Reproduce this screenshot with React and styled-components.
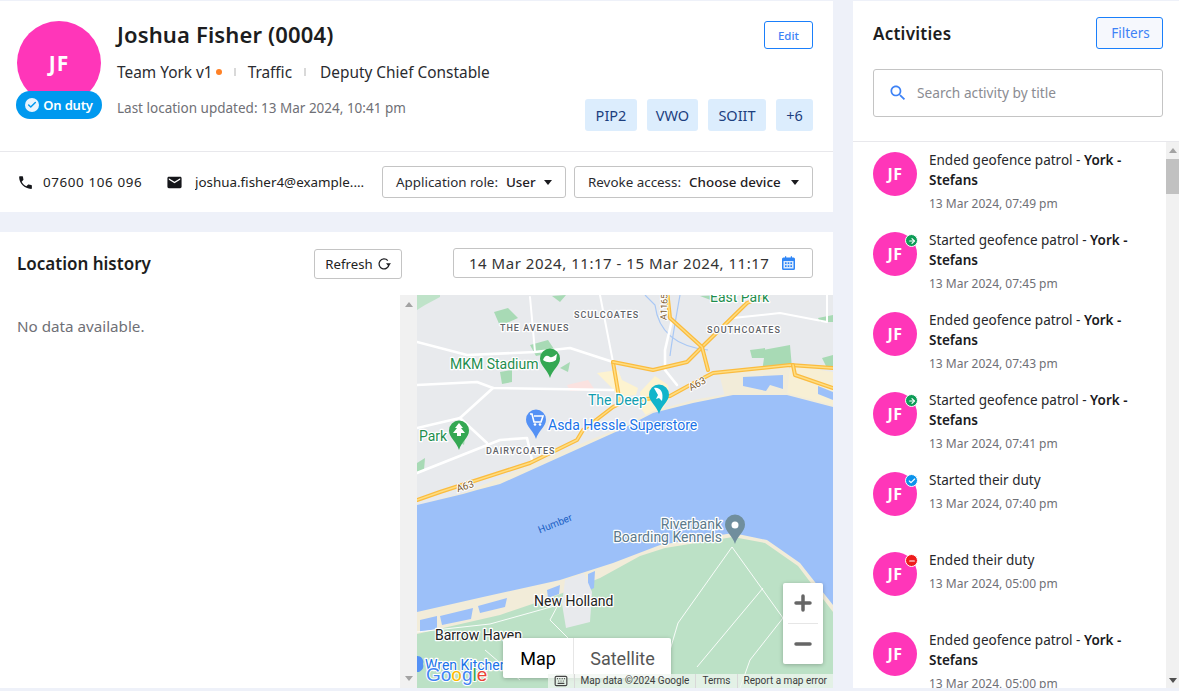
import React from "react";
import styled, { createGlobalStyle } from "styled-components";
import { Check, ArrowRight, Minus, Plus, Keyboard } from "lucide-react";

const FONT = `"Noto Sans", "Open Sans", sans-serif`;

const Global = createGlobalStyle`
  * { box-sizing: border-box; }
  html, body { margin: 0; padding: 0; height: 100%; overflow: hidden; }
  body { font-family: ${FONT}; color: #1f2024; background: #eef1f9; }
`;

const Page = styled.div`
  width: 1179px; height: 691px; padding: 1px 0 3px; display: flex; gap: 20px; background: #eef1f9; overflow: hidden;
`;
const LeftColumn = styled.main`
  width: 833px; display: flex; flex-direction: column; gap: 20px;
`;
const ProfileCard = styled.section`
  background: #fff; height: 211px; display: flex; flex-direction: column;
`;
const ProfileTop = styled.div`
  height: 151px; border-bottom: 1px solid #e8e8ec; padding: 20px 20px 0 17px; display: flex; position: relative;
`;
const AvatarWrap = styled.div`
  width: 84px; height: 98px; position: relative; flex: none;
`;
const Avatar = styled.div`
  width: ${p => p.$size}px; height: ${p => p.$size}px; border-radius: 50%; background: #ff36b9; color: #fff;
  display: flex; align-items: center; justify-content: center; font-weight: 700; font-size: ${p => p.$font}px; letter-spacing: ${p => p.$ls}px; flex: none; position: relative;
`;
const DutyBadge = styled.div`
  position: absolute; left: -1px; top: 70px; width: 86px; height: 28px; border-radius: 14px; background: #0099ef; color: #fff;
  display: flex; align-items: center; justify-content: center; gap: 4px; font-size: 13px; font-weight: 600; letter-spacing: -0.2px;
`;
const DutyCheck = styled.span`
  width: 14px; height: 14px; border-radius: 50%; background: #e8f4fd; color: #0099ef; display: flex; align-items: center; justify-content: center;
`;
const Info = styled.div`
  margin-left: 16px; flex: 1; display: flex; flex-direction: column;
`;
const Name = styled.h1`
  margin: 0; font-size: 22px; line-height: 26px; font-weight: 600; color: #1c1d20; letter-spacing: .15px;
`;
const Meta = styled.div`
  margin-top: 13px; height: 24px; display: flex; align-items: center; font-size: 15.4px; color: #2a2b30;
`;
const MetaItem = styled.span`
  display: inline-flex; align-items: center;
`;
const Dot = styled.i`
  width: 6px; height: 6px; border-radius: 50%; background: #ff8126; margin-left: 3px;
`;
const Sep = styled.i`
  width: 2px; height: 8px; background: #d9d9d9; margin: 0 ${p => p.$gap || 12}px 0 12px;
`;
const Updated = styled.div`
  margin-top: 14px; font-size: 13.5px; line-height: 20px; color: #6f7076;
`;
const EditButton = styled.button`
  position: absolute; right: 20px; top: 20px; width: 49px; height: 28px; border: 1px solid #1a7ffb; border-radius: 3px; background: #fff;
  color: #3d82f6; font: 500 11.5px ${FONT}; padding: 0;
`;
const Tags = styled.div`
  position: absolute; right: 20px; top: 98px; display: flex; gap: 10px;
`;
const Tag = styled.span`
  height: 32px; width: ${p => p.$w}px; border-radius: 3px; background: #dcedfd; color: #1d3f7f; font-size: 14.5px; display: flex; align-items: center; justify-content: center;
`;
const ContactRow = styled.div`
  height: 60px; display: flex; align-items: center; padding: 0 20px 0 18px; font-size: 13.4px; color: #222;
`;
const ContactIcon = styled.svg`
  width: ${p => p.$s}px; height: ${p => p.$s}px; flex: none; fill: #15161a; margin-left: ${p => p.$ml || 0}px;
`;
const ContactText = styled.span`
  margin-left: ${p => p.$ml}px; width: ${p => p.$w}px; white-space: nowrap; overflow: hidden; letter-spacing: ${p => p.$ls || 0}px; flex: none;
`;
const SelectBox = styled.div`
  height: 32px; width: ${p => p.$w}px; margin-left: ${p => p.$ml}px; border: 1px solid #c4c4c4; border-radius: 3px; display: flex; align-items: center; padding: 0 13px;
  font-size: 13.4px; color: #2a2b30; white-space: nowrap; flex: none;
`;
const SelectLabel = styled.span`
  flex: none;
`;
const SelectValue = styled.span`
  margin-left: ${p => p.$ml}px; font-weight: 500; color: #1f2024;
`;
const Caret = styled.i`
  width: 0; height: 0; border-left: 4px solid transparent; border-right: 4px solid transparent; border-top: 5px solid #1b1b1f; margin-left: auto;
`;

const LocationCard = styled.section`
  flex: 1; background: #fff; display: flex; flex-direction: column; min-height: 0;
`;
const LocationHeader = styled.div`
  height: 63px; display: flex; align-items: flex-start; padding: 16px 20px 0 17px;
`;
const SectionTitle = styled.h2`
  margin: 0; font-size: 17px; line-height: 32px; font-weight: 600; color: #1c1d20; flex: 1;
`;
const RefreshButton = styled.button`
  width: 88px; height: 30px; margin-top: 1px; border: 1px solid #c4c4c4; border-radius: 3px; background: #fff; display: flex; align-items: center; justify-content: center; gap: 4px;
  font: 400 13.2px ${FONT}; color: #222; padding: 0;
`;
const DateBox = styled.div`
  width: 360px; height: 30px; margin-left: 51px; border: 1px solid #c4c4c4; border-radius: 3px; display: flex; align-items: center; justify-content: space-between; padding: 0 17px 0 15px;
  font-size: 15px; color: #333; white-space: nowrap; letter-spacing: .52px;
`;
const LocationBody = styled.div`
  flex: 1; display: flex; min-height: 0;
`;
const NoData = styled.div`
  width: 400px; padding: 19px 17px; font-size: 15.2px; line-height: 24px; color: #6f7076;
`;
const Scrollbar = styled.div`
  width: ${p => p.$w}px; background: ${p => p.$bg}; position: relative; flex: none;
`;
const ArrowUp = styled.i`
  position: absolute; top: ${p => p.$t}px; left: 50%; margin-left: -4px; width: 0; height: 0; border-left: 4px solid transparent; border-right: 4px solid transparent; border-bottom: 5px solid #a3a3a3;
`;
const ArrowDown = styled.i`
  position: absolute; bottom: ${p => p.$b}px; left: 50%; margin-left: -4px; width: 0; height: 0; border-left: 4px solid transparent; border-right: 4px solid transparent; border-top: 5px solid ${p => p.$c};
`;
const Thumb = styled.i`
  position: absolute; top: 17px; left: 0; right: 0; height: 35px; background: #c1c1c1;
`;
const MapFrame = styled.div`
  width: 416px; position: relative; overflow: hidden; background: #e8eaed;
`;
const MapSvg = styled.svg`
  display: block; width: 416px; height: 393px;
`;
const MapType = styled.div`
  position: absolute; left: 86px; top: 343px; width: 168px; height: 40px; display: flex; background: #fff; border-radius: 2px; box-shadow: 0 1px 4px rgba(0,0,0,.25); font: 400 18px Roboto, sans-serif;
`;
const MapTab = styled.span`
  display: flex; align-items: center; justify-content: center; width: ${p => p.$w}px; color: ${p => p.$on ? "#000" : "#565656"}; ${p => p.$on ? "" : "border-left:1px solid #e6e6e6;"}
`;
const ZoomBox = styled.div`
  position: absolute; left: 366px; top: 288px; width: 40px; height: 81px; background: #fff; border-radius: 2px; box-shadow: 0 1px 4px rgba(0,0,0,.25); display: flex; flex-direction: column; color: #666;
`;
const ZoomBtn = styled.span`
  flex: 1; display: flex; align-items: center; justify-content: center;
`;
const ZoomLine = styled.i`
  height: 1px; background: #e6e6e6; margin: 0 5px;
`;
const MapFooter = styled.div`
  position: absolute; right: 0; bottom: 0; height: 14px; display: flex; align-items: center; background: rgba(240,245,240,.75); font: 400 10px Roboto, sans-serif; color: #3c3c3c; white-space: nowrap;
`;
const FooterKey = styled.span`
  display: flex; width: 26px; justify-content: center; color: #444;
`;
const FooterItem = styled.span`
  padding: 0 ${p => p.$pr || 6}px 0 6px; border-left: 1px solid #d8d8d8; line-height: 14px;
`;

const RightPanel = styled.aside`
  width: 326px; background: #fff; display: flex; flex-direction: column; min-height: 0;
`;
const ActivitiesHeader = styled.div`
  height: 141px; border-bottom: 1px solid #e8e8ec; padding: 16px 16px 0 20px; display: flex; flex-direction: column;
`;
const HeaderRow = styled.div`
  display: flex; align-items: center; justify-content: space-between;
`;
const ActivitiesTitle = styled.h2`
  margin: 0; font-size: 17px; font-weight: 600; color: #1c1d20; letter-spacing: .25px;
`;
const FilterButton = styled.button`
  width: 67px; height: 32px; border: 1px solid #1a7ffb; border-radius: 3px; background: #f6f8fd; color: #3d82f6; font: 400 13.5px ${FONT}; padding: 0 0 0 2px;
`;
const SearchBox = styled.div`
  margin-top: 20px; height: 48px; border: 1px solid #c4c4c4; border-radius: 3px; display: flex; align-items: center; padding: 0 0 1px 14px; gap: 9px; font-size: 13.7px; color: #8b8c92;
`;
const SearchIcon = styled.svg`
  width: 20px; height: 20px; fill: #3d82f6; flex: none;
`;
const ListArea = styled.div`
  flex: 1; display: flex; min-height: 0; overflow: hidden;
`;
const List = styled.div`
  flex: 1; padding: 10px 0 0 20px; overflow: hidden;
`;
const Item = styled.div`
  height: 80px; display: flex; gap: 12px;
`;
const StatusDot = styled.span`
  position: absolute; right: -1px; top: 2px; width: 11px; height: 11px; border-radius: 50%; background: ${p => p.$c}; border: 1px solid #fff; box-sizing: content-box; color: #fff; display: flex; align-items: center; justify-content: center;
`;
const ItemBody = styled.div`
  width: 212px; margin-top: -2px;
`;
const ItemTitle = styled.div`
  font-size: 13.5px; line-height: 20px; color: #26272b;
`;
const ItemStrong = styled.b`
  font-weight: 600; color: #1a1b1e;
`;
const ItemTime = styled.div`
  margin-top: 4px; font-size: 12px; line-height: 20px; color: #6f7076;
`;

const items = [
  { t: "Ended geofence patrol - ", b: true, d: "13 Mar 2024, 07:49 pm" },
  { t: "Started geofence patrol - ", b: true, d: "13 Mar 2024, 07:45 pm", s: "go" },
  { t: "Ended geofence patrol - ", b: true, d: "13 Mar 2024, 07:43 pm" },
  { t: "Started geofence patrol - ", b: true, d: "13 Mar 2024, 07:41 pm", s: "go" },
  { t: "Started their duty", d: "13 Mar 2024, 07:40 pm", s: "on" },
  { t: "Ended their duty", d: "13 Mar 2024, 05:00 pm", s: "off" },
  { t: "Ended geofence patrol - ", b: true, d: "13 Mar 2024, 05:00 pm" },
];

const statusMap = {
  go: { c: "#0f9d58", I: ArrowRight },
  on: { c: "#0b93ec", I: Check },
  off: { c: "#ee1c1c", I: Minus },
};

const Label = ({ x, y, c = "#1e8e4e", s = 14, w = 400, anchor = "start", ls, children }) => (
  <text x={x} y={y} fill={c} fontSize={s} fontWeight={w} textAnchor={anchor} letterSpacing={ls}
    fontFamily="Roboto, sans-serif" stroke="#fff" strokeWidth={2.5} paintOrder="stroke" strokeLinejoin="round">{children}</text>
);

const Pin = ({ x, y, c, children }) => (
  <g transform={`translate(${x} ${y})`}>
    <path d="M0 29C-2 21-10 17-10 9.500A10 10 0 0 1 10 9.500C10 17 2 21 0 29Z" fill={c} />
    {children}
  </g>
);

const Road = ({ d, w = 2.6 }) => <path d={d} fill="none" stroke="#fff" strokeWidth={w} strokeLinejoin="round" strokeLinecap="round" />;
const Highway = ({ d }) => (
  <g fill="none" strokeLinejoin="round" strokeLinecap="round">
    <path d={d} stroke="#fbbc3f" strokeWidth="4" />
    <path d={d} stroke="#fedd82" strokeWidth="1.500" />
  </g>
);

function MapDrawing() {
  return (
    <MapSvg viewBox="417 295 416 393">
      <rect x="417" y="295" width="416" height="393" fill="#e8eaed" />
      <path d="M417 310L425 305L440 297L440 295L417 295Z" fill="#bfe3c9" />
      {["M494 312L508 308L518 318L500 326Z","M552 296L566 295L560 302Z","M530 345L548 340L556 352L536 356Z","M500 372L512 370L512 382L502 384Z","M560 368L570 362L568 372Z","M417 463L425 458L424 470L417 472Z","M750 350L765 348L765 358L752 358Z","M763 350L790 345L792 368L762 372L764 358Z","M822 358L833 355L833 366L826 366Z","M818 318L833 315L833 322L820 322Z","M700 296L730 295L716 302Z","M456 440L465 438L464 445Z"].map((d, i) => <path key={i} d={d} fill="#a8dab5" />)}
      <path d="M597 373L618 370L622 380L638 388L636 395L618 397L612 388Z" fill="#fdf3d0" />
      <path d="M640 392L655 376L668 385L670 398L660 413L648 418L642 410Z" fill="#fdf3d0" />
      <path d="M567 385L588 380L595 390L570 391Z" fill="#fbe2e0" />
      <path d="M719 373L790 365L787 395L733 395L725 397Z" fill="#f2ecd9" />
      <path d="M790 365L833 372L833 410L800 398L787 395Z" fill="#f7efd4" />
      <path d="M743 377L783 375L783 389L770 385L766 391L743 386Z" fill="#9cc0f9" />
      <path d="M818 386L833 392L833 400L818 394Z" fill="#9cc0f9" />
      <path d="M417 505L463 493L500 478L560 452L620 428L653 411L693 400L733 393L787 393L833 405L833 412L417 512Z" fill="#f2ecd9" />
      <path d="M417 688L417 608L483 592L560 576L613 559L660 541L733 529L767 536L800 559L833 601L833 688Z" fill="#f2ecd9" />
      <path d="M417 688L417 634L500 615L550 598L600 578L640 556L665 548L733 537L765 543L798 566L833 612L833 688Z" fill="#bce1c6" />
      <path d="M417 505L463 494L477 490L500 484L560 457L620 430L653 413L693 403L733 395L787 395L833 407L833 605L800 563L767 540L733 533L660 545L613 563L560 580L483 597L417 612Z" fill="#9cc0f9" />
      <path d="M420 620L437 616L437 629L420 632Z M440 616L473 608L471 619L442 625Z M478 606L507 598L505 607L480 613Z M547 590L560 585L559 594L548 598Z M588 574L595 571L594 588L588 591Z" fill="#9cc0f9" />
      <path d="M565 580L584 573L592 592L590 622L566 628L562 604Z" fill="#e8eaed" />
      <path d="M708 350Q660 345 655 305L645 295M680 295Q672 340 670 356" fill="none" stroke="#a9c8f5" strokeWidth="1.2" />
      <Road d="M417 342L467 355L535 352L570 348L613 362" />
      <Road d="M417 385L477 382L493 388L613 390" />
      <Road d="M493 388L460 418L417 428" />
      <Road d="M460 418L487 443" />
      <Road d="M417 473L500 440L527 438L532 460" />
      <Road d="M530 297L535 352" w={2} />
      <Road d="M600 295L613 362" w={2} />
      <Road d="M677 385L665 370L665 350L672 320" />
      <Road d="M733 318L780 313L827 322L827 295" w={2} />
      <g fill="none" stroke="#fff" strokeWidth="0.9">
        <path d="M732 547L678 623L670 650" /><path d="M732 547L783 618L800 590" />
        <path d="M763 588L697 667" /><path d="M783 618L750 660L740 688" />
        <path d="M417 632L490 624L558 605L550 620L570 640" /><path d="M485 650L520 680" />
      </g>
      <Highway d="M417 500L440 492L530 463L577 440L583 430L613 407L623 402" />
      <Highway d="M613 362L620 403" />
      <Highway d="M623 402L670 396L690 385L713 373L790 365L833 368" />
      <Highway d="M613 362L653 370L687 362L702 347L747 303L767 295" />
      <Highway d="M667 290L670 318L702 347L708 370" />
      <Highway d="M793 365L795 375L833 388" />
      <Label x={574} y={318} c="#5f6368" s={9} w={500} ls={1}>SCULCOATES</Label>
      <Label x={500} y={331} c="#5f6368" s={9} w={500} ls={1}>THE AVENUES</Label>
      <Label x={707} y={333} c="#5f6368" s={9} w={500} ls={1}>SOUTHCOATES</Label>
      <Label x={486} y={454} c="#5f6368" s={9} w={500} ls={1}>DAIRYCOATES</Label>
      <Label x={710} y={302} s={14}>East Park</Label>
      <Label x={450} y={369} s={14}>MKM Stadium</Label>
      <Label x={588} y={405} c="#129eaf" s={14}>The Deep</Label>
      <Label x={548} y={430} c="#1a73e8" s={14}>Asda Hessle Superstore</Label>
      <Label x={419} y={441} s={14}>Park</Label>
      <Label x={722} y={529} c="#5b7a8c" s={14} anchor="end">Riverbank</Label>
      <Label x={722} y={542} c="#5b7a8c" s={14} anchor="end">Boarding Kennels</Label>
      <text x={537} y={527} fill="#1a5fc4" fontSize="10" fontFamily="Roboto, sans-serif" transform="rotate(-22 555 523)">Humber</text>
      <Label x={534} y={606} c="#222" s={14}>New Holland</Label>
      <Label x={435} y={640} c="#222" s={14}>Barrow Haven</Label>
      <Label x={425} y={670} c="#1a73e8" s={14}>Wren Kitchen</Label>
      <text x={667} y={308} fill="#7b5a2e" fontSize="9" fontFamily="Roboto, sans-serif" transform="rotate(-88 667 308) translate(-12 0)" stroke="#fff" strokeWidth="2" paintOrder="stroke">A1165</text>
      <text x={689} y={387} fill="#7b5a2e" fontSize="10" fontFamily="Roboto, sans-serif" transform="rotate(-28 698 385)" stroke="#fff" strokeWidth="2" paintOrder="stroke">A63</text>
      <text x={456} y={490} fill="#7b5a2e" fontSize="10" fontFamily="Roboto, sans-serif" transform="rotate(-18 464 486)" stroke="#fff" strokeWidth="2" paintOrder="stroke">A63</text>
      <Pin x={550} y={349} c="#34a853"><path d="M-7 11c2-5 4-5 7-3 3 1 5-2 7-3l-1 6c-4 3-9 3-13 0Z" fill="#fff" /></Pin>
      <Pin x={659} y={385} c="#12b5cb"><path d="M-5 3c6-1 10 4 8 13l-3-3-3 1 2-4Z" fill="#fff" /></Pin>
      <Pin x={536} y={410} c="#5491f5"><path d="M-6 4h2l2 8h7l2-6h-9" fill="none" stroke="#fff" strokeWidth="1.600" /><circle cx="-1" cy="14.500" r="1.300" fill="#fff" /><circle cx="4" cy="14.500" r="1.300" fill="#fff" /></Pin>
      <Pin x={459} y={421} c="#34a853"><path d="M0 2l4 5h-2l4 5h-4v3h-4v-3h-4l4-5h-2Z" fill="#fff" /></Pin>
      <Pin x={735} y={515} c="#708e9d"><circle cy="10" r="3.500" fill="#fff" /></Pin>
      <path d="M417 656a6 6 0 0 1 6 8a6 6 0 0 1 -6 8Z" fill="#5491f5" />
      <text x={426} y={681} fontSize="19" fontWeight="500" fontFamily="'Liberation Sans', sans-serif" stroke="#fff" strokeWidth="2" paintOrder="stroke">
        <tspan fill="#4285f4">Go</tspan><tspan fill="#fbbc04">o</tspan><tspan fill="#4285f4">g</tspan><tspan fill="#34a853">l</tspan><tspan fill="#ea4335">e</tspan>
      </text>
    </MapSvg>
  );
}

export default function App() {
  return (
    <Page>
      <Global />
      <LeftColumn>
        <ProfileCard>
          <ProfileTop>
            <AvatarWrap>
              <Avatar $size={84} $font={21} $ls={1}>JF</Avatar>
              <DutyBadge><DutyCheck><Check size={10} strokeWidth={3.5} /></DutyCheck>On duty</DutyBadge>
            </AvatarWrap>
            <Info>
              <Name>Joshua Fisher (0004)</Name>
              <Meta>
                <MetaItem>Team York v1<Dot /></MetaItem>
                <Sep />
                <MetaItem>Traffic</MetaItem>
                <Sep $gap={14} />
                <MetaItem>Deputy Chief Constable</MetaItem>
              </Meta>
              <Updated>Last location updated: 13 Mar 2024, 10:41 pm</Updated>
            </Info>
            <EditButton>Edit</EditButton>
            <Tags>
              <Tag $w={52}>PIP2</Tag>
              <Tag $w={51}>VWO</Tag>
              <Tag $w={58}>SOIIT</Tag>
              <Tag $w={37}>+6</Tag>
            </Tags>
          </ProfileTop>
          <ContactRow>
            <ContactIcon $s={17} $ml={-1} viewBox="0 0 24 24"><path d="M6.620 10.790c1.440 2.830 3.760 5.140 6.590 6.590l2.200-2.200c.27-.27.67-.36 1.020-.24 1.120.37 2.330.57 3.570.57.55 0 1 .45 1 1V20c0 .55-.45 1-1 1-9.390 0-17-7.610-17-17 0-.55.45-1 1-1h3.500c.55 0 1 .45 1 1 0 1.250.2 2.450.57 3.570.11.35.03.74-.25 1.020l-2.200 2.200z" /></ContactIcon>
            <ContactText $ml={9} $w={124} $ls={.62}>07600 106 096</ContactText>
            <ContactIcon $s={17} $ml={-1} viewBox="0 0 24 24"><path d="M20 4H4c-1.100 0-2 .9-2 2v12c0 1.100.9 2 2 2h16c1.100 0 2-.9 2-2V6c0-1.100-.9-2-2-2zm0 4l-8 5-8-5V6l8 5 8-5v2z" /></ContactIcon>
            <ContactText $ml={12} $w={172}>joshua.fisher4@example....</ContactText>
            <SelectBox $w={184} $ml={15}><SelectLabel>Application role:</SelectLabel><SelectValue $ml={8}>User</SelectValue><Caret /></SelectBox>
            <SelectBox $w={239} $ml={8}><SelectLabel>Revoke access:</SelectLabel><SelectValue $ml={8}>Choose device</SelectValue><Caret /></SelectBox>
          </ContactRow>
        </ProfileCard>
        <LocationCard>
          <LocationHeader>
            <SectionTitle>Location history</SectionTitle>
            <RefreshButton>Refresh
              <svg width="14" height="14" viewBox="0 0 14 14" fill="none">
                <path d="M10.800 3.600A5 5 0 1 0 12 7.500" stroke="#1f2024" strokeWidth="1.300" />
                <path d="M9 6.200H14L11.500 9.200Z" fill="#1f2024" />
              </svg>
            </RefreshButton>
            <DateBox>14 Mar 2024, 11:17 - 15 Mar 2024, 11:17
              <svg width="13" height="14" viewBox="0 0 13 14">
                <path d="M1.500 1.500H3V0.300H4.200V1.500H8.800V0.300H10V1.500H11.500A1.500 1.500 0 0 1 13 3V12.500A1.500 1.500 0 0 1 11.500 14H1.500A1.500 1.500 0 0 1 0 12.500V3A1.500 1.500 0 0 1 1.500 1.500Z" fill="#2f86f6" />
                <path d="M1.500 5H11.500V12.500H1.500Z" fill="#dcebfd" />
                <path d="M3 6.300H4.600V7.900H3ZM5.700 6.300H7.300V7.900H5.700ZM8.400 6.300H10V7.900H8.400ZM3 9.300H4.600V10.900H3ZM5.700 9.300H7.300V10.900H5.700ZM8.400 9.300H10V10.900H8.400Z" fill="#2f86f6" />
              </svg>
            </DateBox>
          </LocationHeader>
          <LocationBody>
            <NoData>No data available.</NoData>
            <Scrollbar $w={17} $bg="#f1f1f1"><ArrowUp $t={7} /><ArrowDown $b={7} $c="#a3a3a3" /></Scrollbar>
            <MapFrame>
              <MapDrawing />
              <MapType><MapTab $on $w={70}>Map</MapTab><MapTab $w={98}>Satellite</MapTab></MapType>
              <ZoomBox>
                <ZoomBtn><Plus size={24} strokeWidth={3.500} /></ZoomBtn>
                <ZoomLine />
                <ZoomBtn><Minus size={24} strokeWidth={3.500} /></ZoomBtn>
              </ZoomBox>
              <MapFooter>
                <FooterKey><Keyboard size={14} /></FooterKey>
                <FooterItem>Map data ©2024 Google</FooterItem>
                <FooterItem>Terms</FooterItem>
                <FooterItem>Report a map error</FooterItem>
              </MapFooter>
            </MapFrame>
          </LocationBody>
        </LocationCard>
      </LeftColumn>
      <RightPanel>
        <ActivitiesHeader>
          <HeaderRow>
            <ActivitiesTitle>Activities</ActivitiesTitle>
            <FilterButton>Filters</FilterButton>
          </HeaderRow>
          <SearchBox>
            <SearchIcon viewBox="0 0 24 24"><path d="M15.500 14h-.79l-.28-.27C15.410 12.590 16 11.110 16 9.500 16 5.910 13.090 3 9.500 3S3 5.910 3 9.500 5.910 16 9.500 16c1.610 0 3.090-.59 4.230-1.570l.27.28v.79l5 4.990L20.490 19l-4.990-5zm-6 0C7.010 14 5 11.990 5 9.500S7.010 5 9.500 5 14 7.010 14 9.500 11.990 14 9.500 14z" /></SearchIcon>
            Search activity by title
          </SearchBox>
        </ActivitiesHeader>
        <ListArea>
          <List>
            {items.map((it, i) => {
              const st = it.s && statusMap[it.s];
              return (
                <Item key={i}>
                  <Avatar $size={44} $font={16} $ls={.5}>
                    JF
                    {st && <StatusDot $c={st.c}><st.I size={8} strokeWidth={3.500} /></StatusDot>}
                  </Avatar>
                  <ItemBody>
                    <ItemTitle>{it.t}{it.b && <><ItemStrong>York -</ItemStrong><br /><ItemStrong>Stefans</ItemStrong></>}</ItemTitle>
                    <ItemTime>{it.d}</ItemTime>
                  </ItemBody>
                </Item>
              );
            })}
          </List>
          <Scrollbar $w={13} $bg="#f1f1f1"><ArrowUp $t={6} /><Thumb /><ArrowDown $b={5} $c="#505050" /></Scrollbar>
        </ListArea>
      </RightPanel>
    </Page>
  );
}
